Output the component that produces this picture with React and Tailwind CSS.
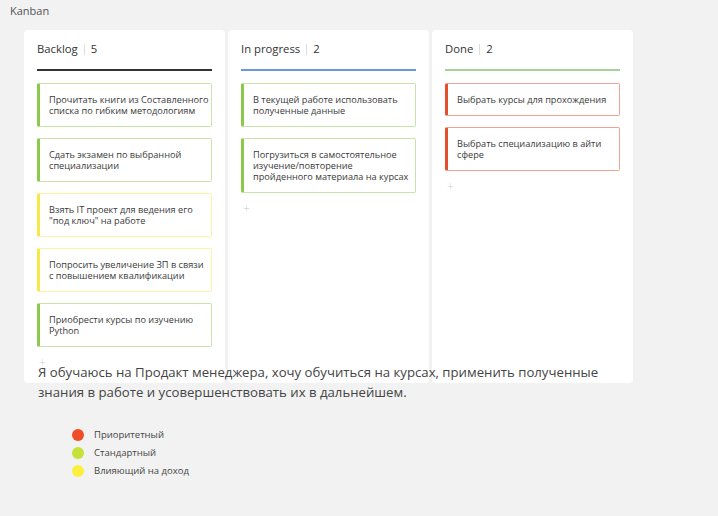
import React from "react";

const cardStyles = {
  green: "border-[#c9e3a8] border-l-[#8cc84b]",
  yellow: "border-[#fbf3a6] border-l-[#f7e84a]",
  red: "border-[#eea593] border-l-[#e5502c]",
};

function Card({ text, color }) {
  return (
    <div
      className={`bg-white border border-l-[3px] rounded-[2px] py-[10px] pl-[9px] pr-[2px] text-[9.2px] leading-[11px] text-[#3a3a3a] ${cardStyles[color]}`}
    >
      {text}
    </div>
  );
}

function Column({ title, count, line, cards }) {
  return (
    <div className="w-[201px] bg-white rounded-[4px] px-[13px] pt-[11px] h-[353px]">
      <div className="flex items-center text-[11.3px] leading-[16px] text-[#333]">
        <span>{title}</span>
        <span className="mx-[6px] w-px h-[11px] bg-[#ddd]" />
        <span>{count}</span>
      </div>
      <div className={`mt-[12px] h-[2px] ${line}`} />
      <div className="mt-[12px] flex flex-col gap-[11px]">
        {cards.map((c, i) => (
          <Card key={i} {...c} />
        ))}
      </div>
      <div className="mt-[10px] pl-[2px] text-[12px] leading-[12px] text-[#ccc] font-light">+</div>
    </div>
  );
}

export default function App() {
  return (
    <div
      className="min-h-[516px] w-[718px] bg-[#f2f2f2] text-[#333]"
      style={{ fontFamily: '"Open Sans", "Noto Sans", sans-serif' }}
    >
      <div className="pt-[4px] pl-[10px] text-[11px] leading-[14px] text-[#555]">Kanban</div>
      <div className="mt-[12px] ml-[24px] flex gap-[3px]">
        <Column
          title="Backlog"
          count="5"
          line="bg-[#333]"
          cards={[
            { text: "Прочитать книги из Составленного списка по гибким методологиям", color: "green" },
            { text: "Сдать экзамен по выбранной специализации", color: "green" },
            { text: "Взять IT проект для ведения его \"под ключ\" на работе", color: "yellow" },
            { text: "Попросить увеличение ЗП в связи с повышением квалификации", color: "yellow" },
            { text: "Приобрести курсы по изучению Python", color: "green" },
          ]}
        />
        <Column
          title="In progress"
          count="2"
          line="bg-[#6b98da]"
          cards={[
            { text: "В текущей работе использовать полученные данные", color: "green" },
            { text: "Погрузиться в самостоятельное изучение/повторение пройденного материала на курсах", color: "green" },
          ]}
        />
        <Column
          title="Done"
          count="2"
          line="bg-[#a6d39a]"
          cards={[
            { text: "Выбрать курсы для прохождения", color: "red" },
            { text: "Выбрать специализацию в айти сфере", color: "red" },
          ]}
        />
      </div>
      <p className="relative -mt-[21px] ml-[38px] w-[575px] text-[13.2px] leading-[20px] text-[#444]">
        Я обучаюсь на Продакт менеджера, хочу обучиться на курсах, применить полученные знания в работе и усовершенствовать их в дальнейшем.
      </p>
      <div className="mt-[27px] ml-[72px] flex flex-col gap-[6px]">
        {[
          ["bg-[#f04c28]", "Приоритетный"],
          ["bg-[#c6e03a]", "Стандартный"],
          ["bg-[#fbf13c]", "Влияющий на доход"],
        ].map(([c, t]) => (
          <div key={t} className="flex items-center h-[12px]">
            <span className={`w-[12px] h-[12px] rounded-full ${c}`} />
            <span className="ml-[10px] text-[9.5px] leading-[12px] text-[#444]">{t}</span>
          </div>
        ))}
      </div>
    </div>
  );
}
